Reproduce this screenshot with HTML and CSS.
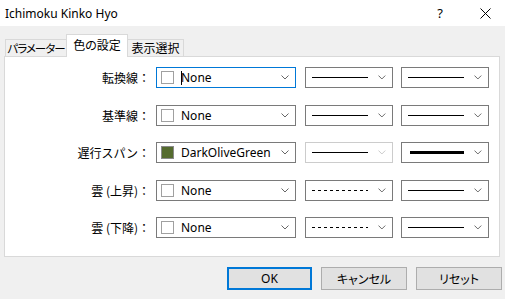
FILE: index.html
```html
<!DOCTYPE html>
<html lang="ja">
<head>
    <meta charset="UTF-8">
    <title>Ichimoku Kinko Hyo</title>
    <link rel="stylesheet" href="styles.css">
</head>
<body>
    <div class="window">
        <div class="titlebar">
            <span class="title">Ichimoku Kinko Hyo</span>
            <span class="help">?</span>
            <svg class="close" width="11" height="11" viewBox="0 0 11 11">
                <path d="M0.5 0.5 L10.5 10.5 M10.5 0.5 L0.5 10.5" stroke="#000" stroke-width="1" fill="none"/>
            </svg>
        </div>

        <div class="tabs">
            <div class="tab tab-first">パラメーター</div>
            <div class="tab active">色の設定</div>
            <div class="tab tab-last">表示選択</div>
        </div>

        <div class="panel">
            <div class="row">
                <div class="label">転換線：</div>
                <div class="combo color focused">
                    <span class="swatch"></span>
                    <span class="caret"></span>
                    <span class="name">None</span>
                    <svg class="chev" width="8" height="5" viewBox="0 0 8 5"><path d="M0.5 0.5 L4 4 L7.5 0.5" stroke="#666" fill="none"/></svg>
                </div>
                <div class="combo line">
                    <svg class="sample" width="58" height="3"><line x1="0" y1="1.5" x2="57" y2="1.5" stroke="#000" stroke-width="1"/></svg>
                    <svg class="chev" width="8" height="5" viewBox="0 0 8 5"><path d="M0.5 0.5 L4 4 L7.5 0.5" stroke="#666" fill="none"/></svg>
                </div>
                <div class="combo line">
                    <svg class="sample" width="58" height="3"><line x1="0" y1="1.5" x2="57" y2="1.5" stroke="#000" stroke-width="1"/></svg>
                    <svg class="chev" width="8" height="5" viewBox="0 0 8 5"><path d="M0.5 0.5 L4 4 L7.5 0.5" stroke="#666" fill="none"/></svg>
                </div>
            </div>

            <div class="row">
                <div class="label">基準線：</div>
                <div class="combo color">
                    <span class="swatch"></span>
                    <span class="name">None</span>
                    <svg class="chev" width="8" height="5" viewBox="0 0 8 5"><path d="M0.5 0.5 L4 4 L7.5 0.5" stroke="#666" fill="none"/></svg>
                </div>
                <div class="combo line">
                    <svg class="sample" width="58" height="3"><line x1="0" y1="1.5" x2="57" y2="1.5" stroke="#000" stroke-width="1"/></svg>
                    <svg class="chev" width="8" height="5" viewBox="0 0 8 5"><path d="M0.5 0.5 L4 4 L7.5 0.5" stroke="#666" fill="none"/></svg>
                </div>
                <div class="combo line">
                    <svg class="sample" width="58" height="3"><line x1="0" y1="1.5" x2="57" y2="1.5" stroke="#000" stroke-width="1"/></svg>
                    <svg class="chev" width="8" height="5" viewBox="0 0 8 5"><path d="M0.5 0.5 L4 4 L7.5 0.5" stroke="#666" fill="none"/></svg>
                </div>
            </div>

            <div class="row">
                <div class="label">遅行スパン：</div>
                <div class="combo color">
                    <span class="swatch olive"></span>
                    <span class="name">DarkOliveGreen</span>
                    <svg class="chev" width="8" height="5" viewBox="0 0 8 5"><path d="M0.5 0.5 L4 4 L7.5 0.5" stroke="#666" fill="none"/></svg>
                </div>
                <div class="combo line disabled">
                    <svg class="sample" width="58" height="3"><line x1="0" y1="1.5" x2="57" y2="1.5" stroke="#000" stroke-width="1"/></svg>
                    <svg class="chev" width="8" height="5" viewBox="0 0 8 5"><path d="M0.5 0.5 L4 4 L7.5 0.5" stroke="#c8c8c8" fill="none"/></svg>
                </div>
                <div class="combo line">
                    <svg class="sample thick" width="58" height="3"><line x1="2" y1="1.5" x2="57" y2="1.5" stroke="#000" stroke-width="3"/></svg>
                    <svg class="chev" width="8" height="5" viewBox="0 0 8 5"><path d="M0.5 0.5 L4 4 L7.5 0.5" stroke="#666" fill="none"/></svg>
                </div>
            </div>

            <div class="row">
                <div class="label">雲 (上昇)：</div>
                <div class="combo color">
                    <span class="swatch"></span>
                    <span class="name">None</span>
                    <svg class="chev" width="8" height="5" viewBox="0 0 8 5"><path d="M0.5 0.5 L4 4 L7.5 0.5" stroke="#666" fill="none"/></svg>
                </div>
                <div class="combo line">
                    <svg class="sample" width="58" height="3"><line x1="0" y1="1.5" x2="57" y2="1.5" stroke="#000" stroke-width="1" stroke-dasharray="3 3"/></svg>
                    <svg class="chev" width="8" height="5" viewBox="0 0 8 5"><path d="M0.5 0.5 L4 4 L7.5 0.5" stroke="#666" fill="none"/></svg>
                </div>
                <div class="combo line">
                    <svg class="sample" width="58" height="3"><line x1="0" y1="1.5" x2="57" y2="1.5" stroke="#000" stroke-width="1"/></svg>
                    <svg class="chev" width="8" height="5" viewBox="0 0 8 5"><path d="M0.5 0.5 L4 4 L7.5 0.5" stroke="#666" fill="none"/></svg>
                </div>
            </div>

            <div class="row">
                <div class="label">雲 (下降)：</div>
                <div class="combo color">
                    <span class="swatch"></span>
                    <span class="name">None</span>
                    <svg class="chev" width="8" height="5" viewBox="0 0 8 5"><path d="M0.5 0.5 L4 4 L7.5 0.5" stroke="#666" fill="none"/></svg>
                </div>
                <div class="combo line">
                    <svg class="sample" width="58" height="3"><line x1="0" y1="1.5" x2="57" y2="1.5" stroke="#000" stroke-width="1" stroke-dasharray="3 3"/></svg>
                    <svg class="chev" width="8" height="5" viewBox="0 0 8 5"><path d="M0.5 0.5 L4 4 L7.5 0.5" stroke="#666" fill="none"/></svg>
                </div>
                <div class="combo line">
                    <svg class="sample" width="58" height="3"><line x1="0" y1="1.5" x2="57" y2="1.5" stroke="#000" stroke-width="1"/></svg>
                    <svg class="chev" width="8" height="5" viewBox="0 0 8 5"><path d="M0.5 0.5 L4 4 L7.5 0.5" stroke="#666" fill="none"/></svg>
                </div>
            </div>
        </div>

        <div class="buttons">
            <button class="btn default">OK</button>
            <button class="btn">キャンセル</button>
            <button class="btn">リセット</button>
        </div>
    </div>
</body>
</html>
```

FILE: styles.css
```css
body {
    margin: 0;
    background-color: #f0f0f0;
    font-family: "Noto Sans", "Noto Sans CJK JP", sans-serif;
    font-size: 12px;
    color: #000;
    font-feature-settings: "palt";
}

.window {
    width: 505px;
    height: 299px;
    overflow: hidden;
}

.titlebar {
    height: 26px;
    background: #fff;
    display: flex;
    align-items: center;
}

.title {
    flex-grow: 1;
    padding-left: 5px;
    font-size: 12px;
}

.help {
    font-size: 13px;
    margin-right: 37px;
}

.close {
    margin-right: 14px;
}

.tabs {
    height: 30px;
    display: flex;
    align-items: flex-end;
    padding-left: 5px;
    font-family: "Noto Sans CJK JP", sans-serif;
}

.tab {
    height: 17px;
    line-height: 16px;
    box-sizing: border-box;
    border: 1px solid #d9d9d9;
    border-bottom: none;
    background: #f0f0f0;
    text-align: center;
    white-space: nowrap;
}

.tab-first {
    width: 61px;
    border-right: none;
    font-size: 11.5px;
    letter-spacing: -1px;
}

.tab-last {
    width: 56px;
    border-left: none;
}

.tab.active {
    position: relative;
    width: 62px;
    height: 23px;
    line-height: 20px;
    margin-bottom: -1px;
    background: #fff;
}

.panel {
    margin-left: 4px;
    width: 496px;
    height: 201px;
    box-sizing: border-box;
    background: #fff;
    border: 1px solid #d9d9d9;
    padding-top: 10px;
}

.row {
    display: flex;
    align-items: center;
    height: 21px;
    margin-bottom: 16.5px;
}

.label {
    width: 145px;
    margin-right: 6px;
    text-align: right;
    font-family: "Noto Sans CJK JP", sans-serif;
    font-feature-settings: normal;
    white-space: nowrap;
}

.combo {
    height: 21px;
    box-sizing: border-box;
    border: 1px solid #7a7a7a;
    display: flex;
    align-items: center;
    background: #fff;
}

.combo.color {
    width: 140px;
    margin-right: 9px;
    padding-left: 4px;
}

.combo.line {
    width: 88px;
    margin-right: 8px;
    padding-left: 6px;
}

.combo.focused {
    border-color: #0078d7;
}

.combo.disabled {
    border-color: #cccccc;
}

.swatch {
    width: 13px;
    height: 13px;
    box-sizing: border-box;
    border: 1px solid #a0a0a0;
    margin-right: 7px;
}

.swatch.olive {
    background: #556b2f;
    border-color: #8a8a8a;
}

.caret {
    width: 1px;
    height: 14px;
    background: #000;
    margin-right: -1px;
}

.name {
    flex-grow: 1;
    white-space: nowrap;
    overflow: hidden;
}

.sample {
    display: block;
    margin-right: 10px;
}

.chev {
    display: block;
    margin-right: 6px;
}

.buttons {
    display: flex;
    justify-content: flex-end;
    gap: 9px;
    padding: 10px 3px 0 0;
}

.btn {
    width: 86px;
    height: 23px;
    box-sizing: border-box;
    background: #e1e1e1;
    border: 1px solid #adadad;
    font-family: "Noto Sans", "Noto Sans CJK JP", sans-serif;
    font-size: 12px;
    font-feature-settings: "palt";
    padding: 0;
    color: #000;
}

.btn.default {
    width: 85px;
    border: 2px solid #0078d7;
}
```
